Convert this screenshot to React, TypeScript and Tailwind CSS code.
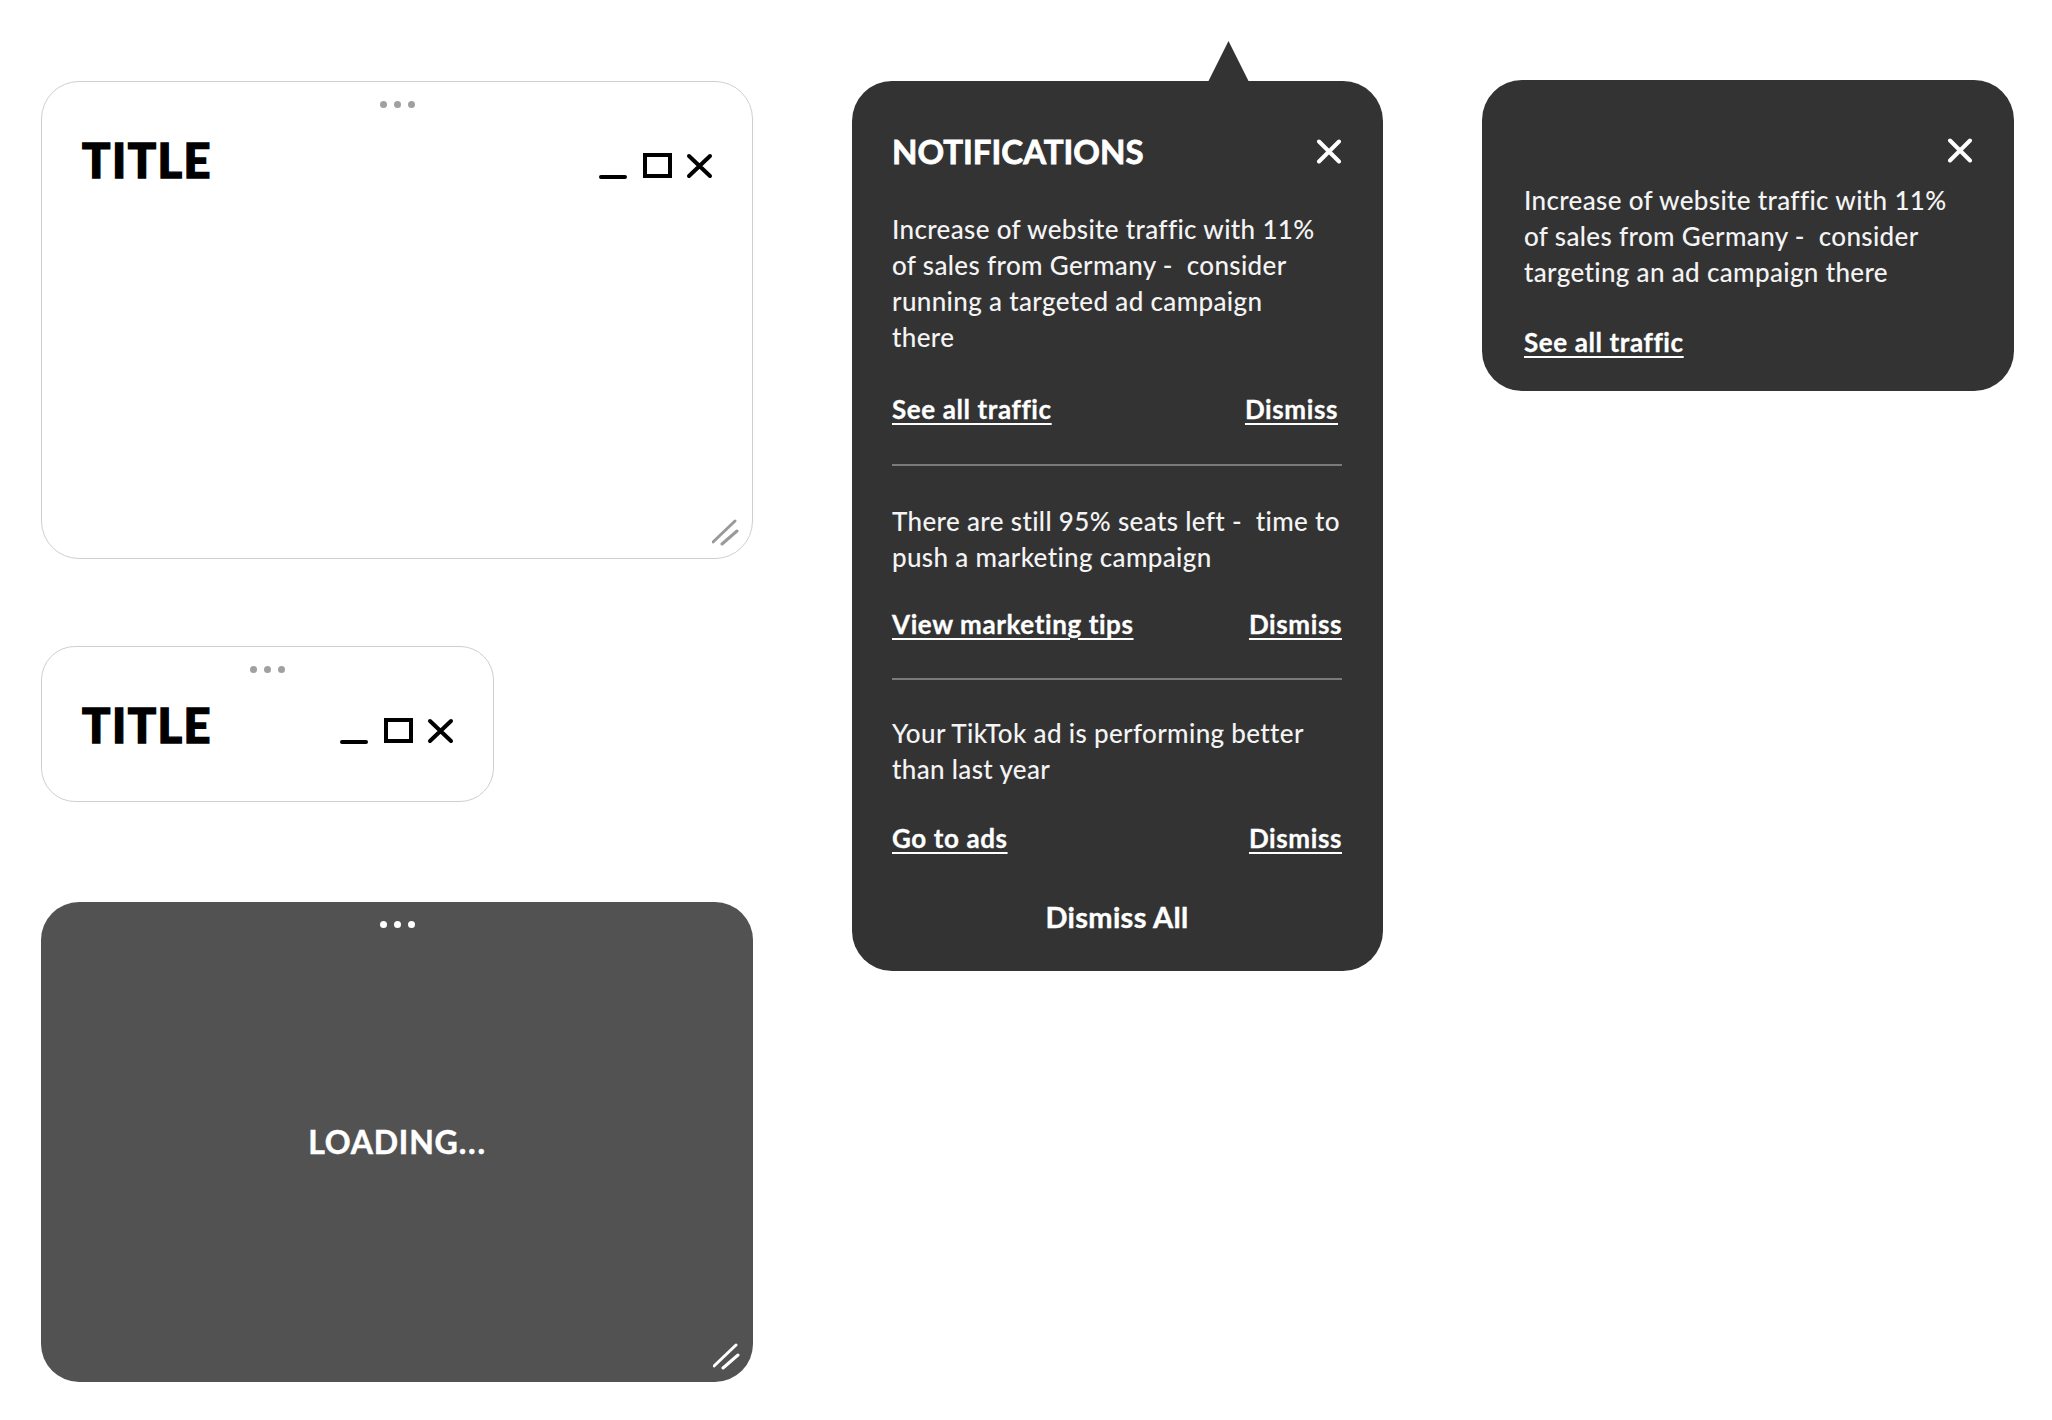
import React from "react";

const Dots = ({ light }: { light?: boolean }) => (
  <div className="flex justify-center gap-[7px] pt-[19px]">
    {[0, 1, 2].map((i) => (
      <span
        key={i}
        className={
          light
            ? "w-[7px] h-[7px] rounded-full bg-white"
            : "w-[7px] h-[7px] rounded-full bg-[#a0a0a0]"
        }
      />
    ))}
  </div>
);

const WindowControls = () => (
  <svg width="117" height="28" viewBox="0 0 117 28" className="mt-[15px]" fill="none">
    <line x1="4" y1="25" x2="28" y2="25" stroke="#000" strokeWidth="4" strokeLinecap="round" />
    <rect x="48" y="3" width="25" height="21" stroke="#000" strokeWidth="4" />
    <path d="M92 4 L113 24 M113 4 L92 24" stroke="#000" strokeWidth="4" strokeLinecap="round" />
  </svg>
);

const ResizeGrip = ({ color }: { color: string }) => (
  <svg
    width="30"
    height="30"
    viewBox="0 0 30 30"
    className="absolute right-[10px] bottom-[10px]"
    fill="none"
  >
    <path d="M1 24 L23 3 M10 26 L25 13" stroke={color} strokeWidth="3" strokeLinecap="round" />
  </svg>
);

const CloseIcon = ({ className }: { className?: string }) => (
  <svg width="26" height="25" viewBox="0 0 26 25" className={className} fill="none">
    <path d="M3 2.5 L23 22.5 M23 2.5 L3 22.5" stroke="#fff" strokeWidth="4" strokeLinecap="round" />
  </svg>
);

const Lines = ({ lines }: { lines: string[] }) => (
  <p className="text-[26px] leading-[36px] font-medium text-[#f4f4f4] tracking-[0.35px]">
    {lines.map((l, i) => (
      <span key={i} className="block whitespace-pre">
        {l}
      </span>
    ))}
  </p>
);

const Link = ({ children }: { children: React.ReactNode }) => (
  <a className="text-[26px] leading-[36px] font-bold text-white underline decoration-2 underline-offset-[4px] tracking-[0.6px] [-webkit-text-stroke:0.3px_#fff]">
    {children}
  </a>
);

const Divider = () => <div className="h-[2px] bg-[#7a7a7a]" />;

const WindowHeader = () => (
  <div className="flex justify-between items-start pl-[40px] pr-[38px] mt-[29px]">
    <h1 className="text-[47px] leading-none font-black tracking-[1.5px] text-black [-webkit-text-stroke:1.4px_#000]">
      TITLE
    </h1>
    <WindowControls />
  </div>
);

export default function App() {
  return (
    <div className="min-h-[1420px] bg-white font-['Lato',sans-serif] flex items-start pl-[41px] pt-[81px]">
      {/* left column: windows */}
      <div className="flex flex-col w-[712px]">
        <div className="relative h-[478px] rounded-[38px] border border-[#cfcfcf] bg-white">
          <Dots />
          <WindowHeader />
          <ResizeGrip color="#9a9a9a" />
        </div>

        <div className="relative w-[453px] h-[156px] mt-[87px] rounded-[34px] border border-[#cfcfcf] bg-white">
          <Dots />
          <WindowHeader />
        </div>

        <div className="relative h-[480px] mt-[100px] rounded-[38px] bg-[#525252] flex flex-col">
          <Dots light />
          <div className="flex-1 flex items-center justify-center pb-[26px]">
            <span className="text-[32px] leading-none font-bold text-white tracking-[0.8px] [-webkit-text-stroke:0.5px_#fff]">
              LOADING.<span className="ml-[1px]">.</span><span className="ml-[1px]">.</span>
            </span>
          </div>
          <ResizeGrip color="#ffffff" />
        </div>
      </div>

      {/* notifications popover */}
      <div className="relative ml-[99px] w-[531px] rounded-[40px] bg-[#333333] pl-[40px] pr-[41px] pt-[54px] pb-[40px]">
        <svg
          width="41"
          height="41"
          viewBox="0 0 41 41"
          className="absolute left-[356px] -top-[40px]"
        >
          <path d="M0 41 L20.5 0 L41 41 Z" fill="#333333" />
        </svg>

        <div className="flex justify-between items-start">
          <h2 className="text-[33px] leading-none font-bold text-white [-webkit-text-stroke:0.8px_#fff]">
            NOTIFICATIONS
          </h2>
          <CloseIcon className="mt-[4px]" />
        </div>

        <div className="mt-[43px]">
          <Lines
            lines={[
              "Increase of website traffic with 11%",
              "of sales from Germany -  consider",
              "running a targeted ad campaign",
              "there",
            ]}
          />
        </div>
        <div className="mt-[36px] flex justify-between pr-[4px]">
          <Link>See all traffic</Link>
          <Link>Dismiss</Link>
        </div>

        <div className="mt-[37px]">
          <Divider />
        </div>

        <div className="mt-[37px]">
          <Lines lines={["There are still 95% seats left -  time to", "push a marketing campaign"]} />
        </div>
        <div className="mt-[31px] flex justify-between">
          <Link>View marketing tips</Link>
          <Link>Dismiss</Link>
        </div>

        <div className="mt-[36px]">
          <Divider />
        </div>

        <div className="mt-[35px]">
          <Lines lines={["Your TikTok ad is performing better", "than last year"]} />
        </div>
        <div className="mt-[33px] flex justify-between">
          <Link>Go to ads</Link>
          <Link>Dismiss</Link>
        </div>

        <div className="mt-[46px] flex justify-center">
          <span className="text-[29px] leading-none font-bold text-white tracking-[0.3px] [-webkit-text-stroke:0.4px_#fff]">
            Dismiss All
          </span>
        </div>
      </div>

      {/* single notification card */}
      <div className="ml-[99px] w-[532px] -mt-[1px] rounded-[40px] bg-[#333333] pl-[42px] pr-[41px] pt-[58px] pb-[31px]">
        <div className="flex justify-end">
          <CloseIcon />
        </div>
        <div className="mt-[19px]">
          <Lines
            lines={[
              "Increase of website traffic with 11%",
              "of sales from Germany -  consider",
              "targeting an ad campaign there",
            ]}
          />
        </div>
        <div className="mt-[34px]">
          <Link>See all traffic</Link>
        </div>
      </div>
    </div>
  );
}
